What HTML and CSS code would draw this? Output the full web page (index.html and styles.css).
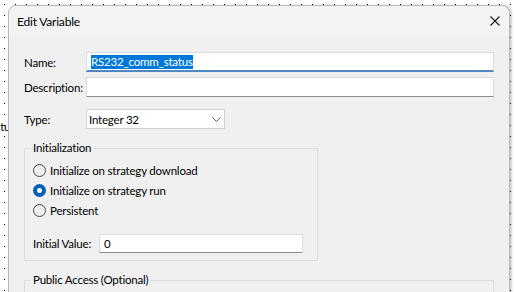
FILE: index.html
```html
<!DOCTYPE html>
<html lang="en">
<head>
  <meta charset="UTF-8">
  <title>Edit Variable</title>
  <link rel="stylesheet" href="styles.css">
</head>
<body>
  <span class="canvas-text">status</span>
  <div class="dialog">
    <div class="titlebar">
      <span class="title">Edit Variable</span>
      <svg class="close" width="10" height="10" viewBox="0 0 10 10">
        <path d="M0.5 0.5 L9.5 9.5 M9.5 0.5 L0.5 9.5" stroke="#1b1b1b" stroke-width="1.1" fill="none"/>
      </svg>
    </div>
    <div class="content">
      <div class="row">
        <label>Name:</label>
        <div class="field focused"><span class="sel">RS232_comm_status</span></div>
      </div>
      <div class="row row-desc">
        <label>Description:</label>
        <div class="field"></div>
      </div>
      <div class="row row-type">
        <label>Type:</label>
        <div class="select">
          <span>Integer 32</span>
          <svg width="9" height="5" viewBox="0 0 9 5">
            <path d="M0.5 0.5 L4.5 4.5 L8.5 0.5" stroke="#5c5c5c" stroke-width="1" fill="none"/>
          </svg>
        </div>
      </div>

      <fieldset class="group group-init">
        <legend>Initialization</legend>
        <div class="radio"><span class="dot"></span>Initialize on strategy download</div>
        <div class="radio"><span class="dot checked"></span>Initialize on strategy run</div>
        <div class="radio"><span class="dot"></span>Persistent</div>
        <div class="row row-init">
          <label>Initial Value:</label>
          <div class="field">0</div>
        </div>
      </fieldset>

      <fieldset class="group group-public">
        <legend>Public Access (Optional)</legend>
      </fieldset>
    </div>
  </div>
</body>
</html>
```

FILE: styles.css
```css
html, body {
  margin: 0;
  height: 292px;
  overflow: hidden;
}
body {
  position: relative;
  font-family: Lato, "Noto Sans", sans-serif;
  font-size: 11.5px;
  letter-spacing: -0.2px;
  color: #000;
  background-color: #fff;
  background-image:
    linear-gradient(to right, #fff 10px, transparent 10px),
    linear-gradient(to bottom, #fff 10px, #000 10px);
  background-size: 11px 11px;
  background-position: -6px -6px;
}
.canvas-text {
  position: absolute;
  left: -14px;
  top: 120px;
  line-height: 14px;
}
.dialog {
  position: relative;
  z-index: 1;
  margin: 5px 0 0 8px;
  width: 502px;
  height: 300px;
  box-sizing: border-box;
  border: 1px solid #b9b9b9;
  border-bottom: none;
  border-radius: 8px 8px 0 0;
  background-color: #f0f0f0;
  box-shadow: 2px 0 2px rgba(0, 0, 0, 0.18);
  overflow: hidden;
}
.titlebar {
  height: 30px;
  display: flex;
  align-items: center;
  justify-content: space-between;
  padding: 0 9px 0 8px;
  background-color: #f3f3f3;
}
.title {
  font-size: 12px;
}
.close {
  display: block;
}
.content {
  padding: 16px 15px 0;
}
.row {
  display: grid;
  grid-template-columns: 62px 1fr;
  align-items: center;
  height: 20px;
}
.row-desc {
  margin-top: 5px;
}
.row-type {
  margin-top: 12px;
  grid-template-columns: 62px 139px;
}
.field {
  height: 100%;
  box-sizing: border-box;
  background-color: #fff;
  border: 1px solid #dcdcdc;
  border-bottom-color: #8c8c8c;
  padding: 0 4px;
  display: flex;
  align-items: center;
}
.field.focused {
  border-bottom: 2px solid #4f87c2;
  padding-top: 1px;
}
.sel {
  background-color: #0078d7;
  color: #fff;
  line-height: 14px;
}
.select {
  height: 100%;
  box-sizing: border-box;
  background-color: #fff;
  border: 1px solid #d2d2d2;
  padding: 0 3px 0 2px;
  display: flex;
  align-items: center;
  justify-content: space-between;
}
.select svg {
  display: block;
}
.group {
  margin: 11px 0 0;
  padding: 0 14px 7px 8px;
  border: 1px solid #dcdcdc;
  box-sizing: border-box;
  min-width: 0;
}
.group legend {
  padding: 0 2px;
  margin-left: -2px;
  line-height: 16px;
}
.group-init {
  width: 294px;
}
.radio {
  display: flex;
  align-items: center;
  gap: 4px;
  height: 20px;
}
.radio:first-of-type {
  margin-top: 4px;
}
.dot {
  width: 13px;
  height: 13px;
  box-sizing: border-box;
  border: 1px solid #4a4a4a;
  border-radius: 50%;
  display: flex;
  align-items: center;
  justify-content: center;
}
.dot.checked {
  border: none;
  background-color: #005fb8;
}
.dot.checked::after {
  content: "";
  width: 5px;
  height: 5px;
  border-radius: 50%;
  background-color: #fff;
}
.row-init {
  margin-top: 14px;
  height: 19px;
  grid-template-columns: 66px 1fr;
}
.group-public {
  margin-top: 11px;
  height: 40px;
}
```
